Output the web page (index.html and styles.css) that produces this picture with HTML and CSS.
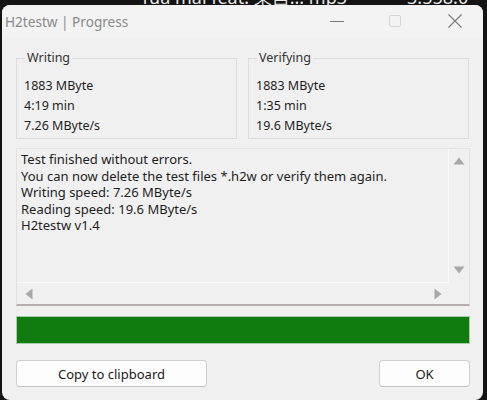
FILE: index.html
```html
<!DOCTYPE html>
<html>
<head>
<meta charset="utf-8">
<link rel="stylesheet" href="styles.css">
</head>
<body>
<div class="desk-top"><span class="desk-text">Tua mai feat. 東自... mp3</span><span class="desk-size">3.558.0</span></div>
<div class="window">
  <div class="titlebar">
    <span class="title">H2testw | Progress</span>
    <div class="controls">
      <span class="ctl min"><svg width="16" height="16" viewBox="0 0 16 16"><path d="M1 8.5h14" stroke="#7a7a7a" stroke-width="1"/></svg></span>
      <span class="ctl max"><svg width="14" height="14" viewBox="0 0 14 14"><rect x="1.5" y="1.5" width="11" height="11" rx="1.5" fill="none" stroke="#d6d6d6" stroke-width="1"/></svg></span>
      <span class="ctl close"><svg width="16" height="16" viewBox="0 0 16 16"><path d="M1.5 1.5l13 13M14.5 1.5l-13 13" stroke="#7a7a7a" stroke-width="1.1"/></svg></span>
    </div>
  </div>
  <div class="content">
    <div class="groups">
      <fieldset class="group">
        <legend>Writing</legend>
        <div class="line">1883 MByte</div>
        <div class="line">4:19 min</div>
        <div class="line">7.26 MByte/s</div>
      </fieldset>
      <fieldset class="group">
        <legend>Verifying</legend>
        <div class="line">1883 MByte</div>
        <div class="line">1:35 min</div>
        <div class="line">19.6 MByte/s</div>
      </fieldset>
    </div>
    <div class="log">
      <div class="log-main">
        <div class="log-text">
          <div>Test finished without errors.</div>
          <div>You can now delete the test files *.h2w or verify them again.</div>
          <div>Writing speed: 7.26 MByte/s</div>
          <div>Reading speed: 19.6 MByte/s</div>
          <div>H2testw v1.4</div>
        </div>
        <div class="vscroll">
          <svg width="12" height="8" viewBox="0 0 12 8"><path d="M6 0.5L11.5 7.5H0.5Z" fill="#a8a8a8"/></svg>
          <svg width="12" height="8" viewBox="0 0 12 8"><path d="M6 7.5L11.5 0.5H0.5Z" fill="#a8a8a8"/></svg>
        </div>
      </div>
      <div class="hscroll">
        <svg width="8" height="12" viewBox="0 0 8 12"><path d="M0.5 6L7.5 0.5V11.5Z" fill="#a8a8a8"/></svg>
        <svg width="8" height="12" viewBox="0 0 8 12"><path d="M7.5 6L0.5 0.5V11.5Z" fill="#a8a8a8"/></svg>
      </div>
    </div>
    <div class="progress"><div class="bar" style="width:100%"></div></div>
    <div class="buttons">
      <button class="btn copy">Copy to clipboard</button>
      <button class="btn ok">OK</button>
    </div>
  </div>
</div>
</body>
</html>
```
FILE: styles.css
```css
* { box-sizing: border-box; }
html, body { margin: 0; padding: 0; }
body {
  width: 487px;
  height: 400px;
  overflow: hidden;
  background: #141414;
  font-family: "Noto Sans", "Open Sans", sans-serif;
}
.desk-top {
  height: 5px;
  overflow: hidden;
  color: #e8e8e8;
  font-size: 18px;
  line-height: 18px;
  display: flex;
  padding-left: 140px;
}
.desk-text, .desk-size { margin-top: -12px; display: block; white-space: nowrap; }
.desk-size { margin-left: 60px; }
.window {
  margin-left: 2px;
  width: 481px;
  height: 395px;
  background: #f0f0f0;
  border-radius: 8px;
  display: flex;
  flex-direction: column;
}
.titlebar {
  height: 33px;
  display: flex;
  align-items: center;
  padding-left: 3px;
  padding-bottom: 1px;
  background: #f3f3f3;
  border-radius: 8px 8px 0 0;
}
.title {
  font-size: 13.6px;
  color: #8a8a8a;
  flex: 1;
}
.controls { display: flex; align-items: center; }
.ctl { display: flex; align-items: center; justify-content: center; }
.min { width: 16px; margin-right: 43px; }
.max { width: 14px; margin-right: 45px; }
.close { width: 16px; margin-right: 20px; }
.content {
  padding: 13px 13px 0 14px;
  display: flex;
  flex-direction: column;
}
.groups {
  display: flex;
  gap: 11px;
  padding-right: 1px;
}
.group {
  flex: 1;
  margin: 0;
  border: 1px solid #dcdcdc;
  padding: 11px 7px 6px 7px;
  height: 88px;
  min-width: 0;
}
.group legend {
  padding: 0 2px;
  margin-left: 1px;
  font-size: 12.5px;
  color: #333;
  line-height: 14px;
}
.line {
  font-size: 12.5px;
  line-height: 20px;
  color: #1e1e1e;
}
.log {
  margin-top: 9px;
  height: 158px;
  border: 1px solid #e2e2e2;
  border-bottom: 2px solid #b8aeae;
  display: flex;
  flex-direction: column;
}
.log-main {
  flex: 1;
  display: flex;
}
.log-text {
  flex: 1;
  border-right: 1px solid #fafafa;
  border-bottom: 1px solid #fafafa;
  padding: 2px 4px;
  font-size: 13px;
  line-height: 16.6px;
  color: #1e1e1e;
}
.vscroll {
  width: 20px;
  display: flex;
  flex-direction: column;
  justify-content: space-between;
  align-items: center;
  padding: 8px 0 9px;
}
.hscroll {
  height: 21px;
  display: flex;
  justify-content: space-between;
  align-items: center;
  padding: 0 27px 0 8px;
}
.progress {
  margin-top: 10px;
  height: 28px;
  border: 1px solid #a9c9a9;
  background: #e6e6e6;
}
.bar { height: 100%; background: #107c10; }
.buttons {
  margin-top: 16px;
  display: flex;
  justify-content: space-between;
}
.btn {
  height: 27px;
  background: #fdfdfd;
  border: 1px solid #d0d0d0;
  border-bottom-color: #c0c0c0;
  border-radius: 4px;
  font-family: "Noto Sans", "Open Sans", sans-serif;
  font-size: 13px;
  color: #1a1a1a;
  padding: 0;
}
.copy { width: 191px; }
.ok { width: 91px; }
```
